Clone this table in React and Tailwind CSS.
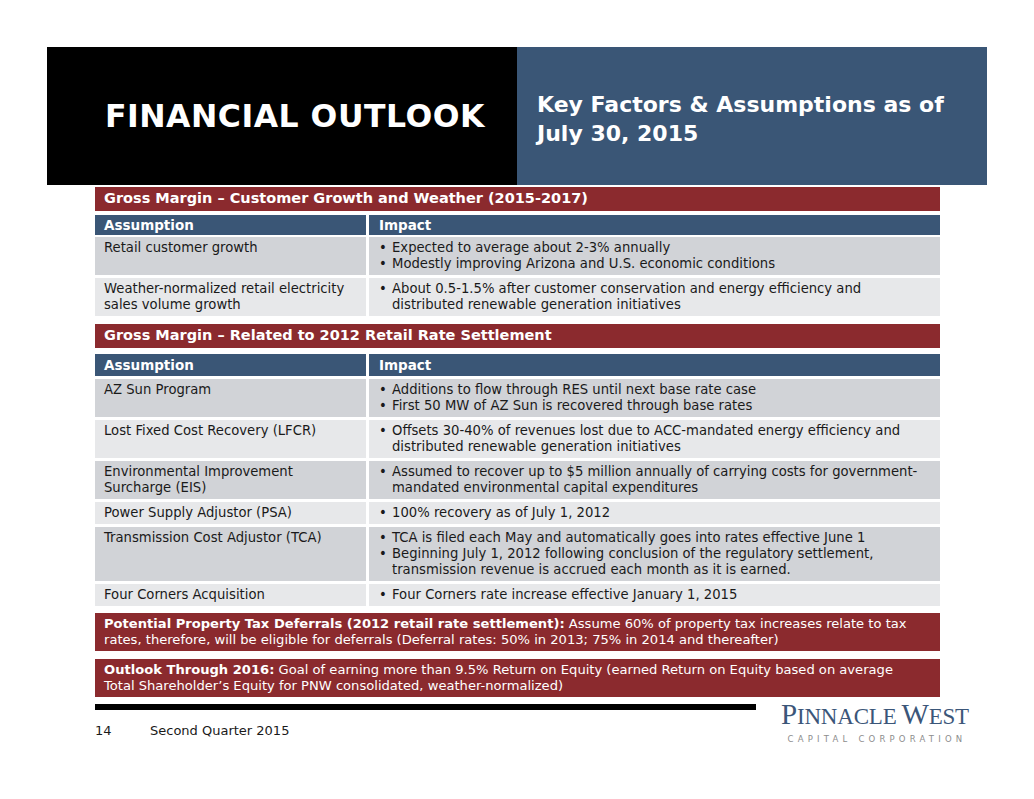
import React from 'react';

const body = { fontFamily: '"DejaVu Sans", Verdana, sans-serif' };

const section1 = [
  {
    label: ['Retail customer growth'],
    impact: [
      ['Expected to average about 2-3% annually'],
      ['Modestly improving Arizona and U.S. economic conditions'],
    ],
  },
  {
    label: ['Weather-normalized retail electricity', 'sales volume growth'],
    impact: [
      [
        'About 0.5-1.5% after customer conservation and energy efficiency and',
        'distributed renewable generation initiatives',
      ],
    ],
  },
];

const section2 = [
  {
    label: ['AZ Sun Program'],
    impact: [
      ['Additions to flow through RES until next base rate case'],
      ['First 50 MW of AZ Sun is recovered through base rates'],
    ],
  },
  {
    label: ['Lost Fixed Cost Recovery (LFCR)'],
    impact: [
      [
        'Offsets 30-40% of revenues lost due to ACC-mandated energy efficiency and',
        'distributed renewable generation initiatives',
      ],
    ],
  },
  {
    label: ['Environmental Improvement', 'Surcharge (EIS)'],
    impact: [
      [
        'Assumed to recover up to $5 million annually of carrying costs for government-',
        'mandated environmental capital expenditures',
      ],
    ],
  },
  {
    label: ['Power Supply Adjustor (PSA)'],
    impact: [['100% recovery as of July 1, 2012']],
  },
  {
    label: ['Transmission Cost Adjustor (TCA)'],
    impact: [
      ['TCA is filed each May and automatically goes into rates effective June 1'],
      [
        'Beginning July 1, 2012 following conclusion of the regulatory settlement,',
        'transmission revenue is accrued each month as it is earned.',
      ],
    ],
  },
  {
    label: ['Four Corners Acquisition'],
    impact: [['Four Corners rate increase effective January 1, 2015']],
  },
];

function Lines({ lines }) {
  return lines.map((l, i) => (
    <div key={i} className="whitespace-nowrap">
      {l}
    </div>
  ));
}

function Row({ row, dark }) {
  const bg = dark ? 'bg-[#d1d3d7]' : 'bg-[#e7e8ea]';
  return (
    <div className="flex gap-[3px] text-[13.2px] leading-[16px] text-[#1a1a1a]">
      <div className={`w-[271px] shrink-0 ${bg} pl-[9px] py-[3px]`}>
        <Lines lines={row.label} />
      </div>
      <div className={`flex-1 ${bg} pl-[10px] py-[3px]`}>
        {row.impact.map((b, i) => (
          <div key={i} className="flex">
            <span className="w-[13px] shrink-0">•</span>
            <div>
              <Lines lines={b} />
            </div>
          </div>
        ))}
      </div>
    </div>
  );
}

function SectionHead({ title }) {
  return (
    <div className="bg-[#8b2a2e] h-[24px] flex items-center pl-[9px] text-white font-bold text-[14.5px]">
      {title}
    </div>
  );
}

function TableHead({ tall }) {
  const h = tall ? 'h-[22px]' : 'h-[20px]';
  return (
    <div className={`flex gap-[3px] text-white font-bold text-[13.5px] leading-[16px] ${h}`}>
      <div className="w-[271px] shrink-0 bg-[#3a5676] pl-[9px] flex items-center">Assumption</div>
      <div className="flex-1 bg-[#3a5676] pl-[10px] flex items-center">Impact</div>
    </div>
  );
}

function Logo() {
  return (
    <div className="flex flex-col items-center w-[190px]">
      <div
        className="text-[#3b5679] leading-none tracking-[-0.2px] whitespace-nowrap"
        style={{ fontFamily: '"Liberation Serif", "Times New Roman", serif' }}
      >
        <span className="text-[29px]">P</span>
        <span className="text-[23px]">INNACLE</span>
        <span className="text-[29px] ml-[5px]">W</span>
        <span className="text-[23px]">EST</span>
      </div>
      <div className="mt-[6px] text-[8.5px] leading-none tracking-[4.2px] text-[#8d8d8d] pl-[4px] whitespace-nowrap">
        CAPITAL CORPORATION
      </div>
    </div>
  );
}

export default function App() {
  return (
    <div className="w-[1034px] h-[799px] bg-white overflow-hidden" style={body}>
      <div className="pt-[47px] pl-[47px] flex">
        <div className="w-[470px] h-[138px] bg-black flex items-center pl-[58px] pt-[2px]">
          <h1 className="text-white font-bold text-[31.5px] tracking-[0.5px] leading-none whitespace-nowrap">
            FINANCIAL OUTLOOK
          </h1>
        </div>
        <div className="w-[470px] h-[138px] bg-[#3a5676] flex items-center pl-[20px] pt-[5px]">
          <h2 className="text-white font-bold text-[22px] leading-[29px] whitespace-nowrap">
            Key Factors &amp; Assumptions as of
            <br />
            July 30, 2015
          </h2>
        </div>
      </div>

      <div className="ml-[95px] w-[845px] mt-[2px] flex flex-col">
        <SectionHead title="Gross Margin – Customer Growth and Weather (2015-2017)" />
        <div className="mt-[4px]">
          <TableHead />
        </div>
        <div className="mt-[2px] flex flex-col gap-[3px]">
          {section1.map((r, i) => (
            <Row key={i} row={r} dark={i % 2 === 0} />
          ))}
        </div>

        <div className="mt-[8px]">
          <SectionHead title="Gross Margin – Related to 2012 Retail Rate Settlement" />
        </div>
        <div className="mt-[6px] flex flex-col gap-[3px]">
          <TableHead tall />
          {section2.map((r, i) => (
            <Row key={i} row={r} dark={i % 2 === 0} />
          ))}
        </div>

        <div className="mt-[7px] bg-[#8b2a2e] text-white text-[13.1px] leading-[16px] pl-[9px] py-[3px] whitespace-nowrap">
          <b>Potential Property Tax Deferrals (2012 retail rate settlement):</b> Assume 60% of property tax increases relate to tax
          <br />
          rates, therefore, will be eligible for deferrals (Deferral rates: 50% in 2013; 75% in 2014 and thereafter)
        </div>
        <div className="mt-[8px] bg-[#8b2a2e] text-white text-[13.1px] leading-[16px] pl-[9px] py-[3px] whitespace-nowrap">
          <b>Outlook Through 2016:</b> Goal of earning more than 9.5% Return on Equity (earned Return on Equity based on average
          <br />
          Total Shareholder’s Equity for PNW consolidated, weather-normalized)
        </div>
      </div>

      <div className="ml-[95px] mt-[7px] flex items-start">
        <div className="w-[661px]">
          <div className="h-[6px] bg-black" />
          <div className="mt-[14px] flex text-[13px] text-[#1a1a1a] leading-none">
            <span className="w-[55px]">14</span>
            <span>Second Quarter 2015</span>
          </div>
        </div>
        <div className="ml-[24px] -mt-[4px]">
          <Logo />
        </div>
      </div>
    </div>
  );
}
